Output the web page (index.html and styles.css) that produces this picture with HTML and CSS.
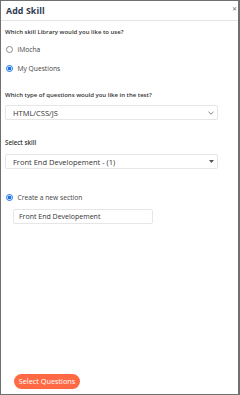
FILE: index.html
```html
<!DOCTYPE html>
<html>
<head>
<meta charset="utf-8">
<link rel="stylesheet" href="styles.css">
</head>
<body>
<div class="panel">
  <div class="header">
    <span class="title">Add Skill</span>
    <span class="close">&#x2715;</span>
  </div>
  <div class="body">
    <div class="question q1">Which skill Library would you like to use?</div>
    <div class="radio-row r1"><span class="radio"></span><span class="rlabel">iMocha</span></div>
    <div class="radio-row r2"><span class="radio checked"></span><span class="rlabel">My Questions</span></div>
    <div class="question q2">Which type of questions would you like in the test?</div>
    <div class="select s1">
      <span class="stext">HTML/CSS/JS</span>
      <svg class="chev" width="6" height="4" viewBox="0 0 6 4"><path d="M0.5 0.8 L3 3.2 L5.5 0.8" fill="none" stroke="#777" stroke-width="0.9"/></svg>
    </div>
    <div class="question q3">Select skill</div>
    <div class="select s2">
      <span class="stext">Front End Developement - (1)</span>
      <svg class="caret" width="5" height="3" viewBox="0 0 5 3"><path d="M0 0 L5 0 L2.5 3 Z" fill="#555"/></svg>
    </div>
    <div class="radio-row r3"><span class="radio checked"></span><span class="rlabel">Create a new section</span></div>
    <div class="input">Front End Developement</div>
    <div class="spacer"></div>
    <div class="footer"><button class="btn">Select Questions</button></div>
  </div>
</div>
</body>
</html>
```
FILE: styles.css
```css
* { box-sizing: border-box; }
html, body { margin: 0; padding: 0; background: #fff; }
body { font-family: "Open Sans", "Liberation Sans", sans-serif; color: #333; }
.panel {
  width: 240px; height: 395px;
  border: 1px solid #707070;
  border-right-width: 2px;
  display: flex; flex-direction: column;
}
.header {
  height: 20px;
  border-bottom: 1px solid #e4e4e4;
  display: flex; align-items: center; justify-content: space-between;
  padding: 0 1px 0 5px;
}
.title { font-size: 8.8px; font-weight: 700; color: #2f3b4f; letter-spacing: 0.1px; }
.close { font-size: 6px; color: #666; margin-top: -4px; }
.body { flex: 1; display: flex; flex-direction: column; padding: 0 0 0 4px; }
.question { font-size: 6px; font-weight: 600; color: #333; height: 10px; line-height: 10px; }
.q1 { margin-top: 6px; }
.radio-row { display: flex; align-items: center; height: 10px; }
.r1 { margin-top: 7px; }
.r2 { margin-top: 9px; }
.radio {
  width: 7px; height: 7px; border-radius: 50%;
  border: 1px solid #8a8a8a; margin-left: 0.5px; background: #fff;
}
.radio.checked {
  border-color: #1a73e8;
  background: radial-gradient(circle, #1a73e8 0 1.8px, #fff 2.1px);
}
.rlabel { font-size: 6.7px; color: #444; margin-left: 5px; }
.q2 { margin-top: 17px; }
.select {
  width: 213px; height: 15px; margin-top: 5px;
  border: 1px solid #e6e6e6; border-radius: 2px;
  display: flex; align-items: center; justify-content: space-between;
  padding: 0 3px 0 7px;
}
.stext { font-size: 7.5px; color: #333; }
.q3 { margin-top: 18px; font-size: 6.2px; }
.s2 { margin-top: 6px; }
.r3 { margin-top: 23px; }
.input {
  width: 140px; height: 15px; margin: 7px 0 0 8px;
  border: 1px solid #e6e6e6; border-radius: 2px;
  font-size: 7px; color: #333; line-height: 13px; padding-left: 5px;
}
.spacer { flex: 1; }
.footer { padding: 0 0 5px 9px; }
.btn {
  width: 66px; height: 15px; border: none; border-radius: 8px;
  background: #ff6a45; color: #fff; font-family: inherit;
  font-size: 7.3px; font-weight: 500; padding: 0;
}
```
